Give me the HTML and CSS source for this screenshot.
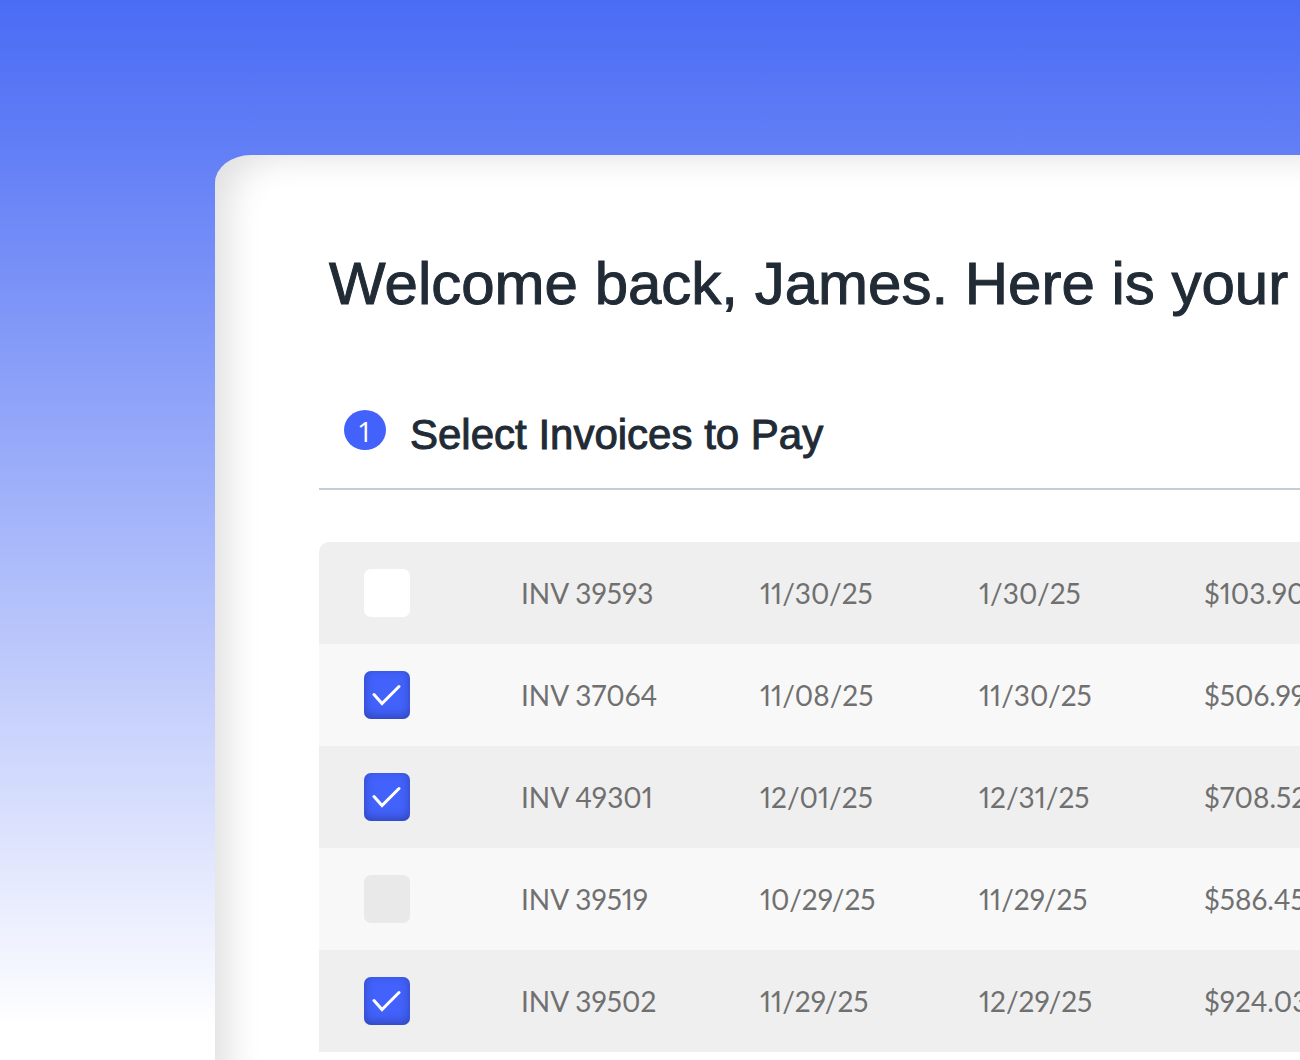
FILE: index.html
```html
<!DOCTYPE html>
<html lang="en">
<head>
    <meta charset="UTF-8">
    <meta name="viewport" content="width=device-width, initial-scale=1.0">
    <title>Select Invoices to Pay</title>
    <link rel="stylesheet" href="styles.css">
</head>
<body>
    <main class="panel">
        <h1>Welcome back, James. Here is your</h1>
        <div class="step">
            <span class="step-number">1</span>
            <h2>Select Invoices to Pay</h2>
        </div>
        <table class="invoices">
            <colgroup>
                <col class="col-check">
                <col class="col-invoice">
                <col class="col-date">
                <col class="col-due">
                <col>
            </colgroup>
            <tbody>
                <tr>
                    <td><input type="checkbox" class="check" aria-label="Select INV 39593"></td>
                    <td>INV 39593</td>
                    <td>11/30/25</td>
                    <td>1/30/25</td>
                    <td>$103.90</td>
                </tr>
                <tr>
                    <td><input type="checkbox" class="check" aria-label="Select INV 37064" checked></td>
                    <td>INV 37064</td>
                    <td>11/08/25</td>
                    <td>11/30/25</td>
                    <td>$506.99</td>
                </tr>
                <tr>
                    <td><input type="checkbox" class="check" aria-label="Select INV 49301" checked></td>
                    <td>INV 49301</td>
                    <td>12/01/25</td>
                    <td>12/31/25</td>
                    <td>$708.52</td>
                </tr>
                <tr>
                    <td><input type="checkbox" class="check" aria-label="Select INV 39519"></td>
                    <td>INV 39519</td>
                    <td>10/29/25</td>
                    <td>11/29/25</td>
                    <td>$586.45</td>
                </tr>
                <tr>
                    <td><input type="checkbox" class="check" aria-label="Select INV 39502" checked></td>
                    <td>INV 39502</td>
                    <td>11/29/25</td>
                    <td>12/29/25</td>
                    <td>$924.03</td>
                </tr>
            </tbody>
        </table>
    </main>
</body>
</html>
```
FILE: styles.css
```css
* {
    box-sizing: border-box;
}

body {
    min-height: 100vh;
    display: flex;
    margin: 0;
    padding: 155px 0 0 215px;
    overflow: hidden;
    background: linear-gradient(to bottom, #4a6cf5 0%, #6480f6 15%, #ffffff 97%);
    color: #212b36;
    font-family: "Liberation Sans", Arial, sans-serif;
}

.panel {
    flex: 1;
    min-width: 0;
    padding: 88px 0 0 104px;
    background: #fff;
    border-radius: 36px 0 0 0 / 28px 0 0 0;
    /* Shade only the left and top edges */
    box-shadow: inset 30px 18px 34px -16px rgba(0, 0, 0, 0.12);
}

h1, h2 {
    margin: 0;
    font-weight: 400;
    white-space: nowrap;
    -webkit-text-stroke: 1px #212b36;
}

h1 {
    padding-left: 10px;
    font-size: 60px;
    line-height: 82px;
}

.step {
    display: flex;
    align-items: flex-start;
    gap: 24px;
    margin-top: 85px;
    padding: 0 0 28px 25px;
    border-bottom: 2px solid #c4cdd8;
}

.step-number {
    width: 42px;
    height: 40px;
    border-radius: 50%;
    background: #4262fb;
    color: #fff;
    font-family: "Open Sans", sans-serif;
    font-size: 28px;
    line-height: 42px;
    text-align: center;
}

h2 {
    font-size: 42px;
    line-height: 50px;
}

.invoices {
    width: 100%;
    margin-top: 52px;
    border-collapse: collapse;
    table-layout: fixed;
    border-radius: 10px 0 0 0;
    overflow: hidden;
    color: #707070;
    font-family: Lato, sans-serif;
    font-size: 28px;
    font-variant-numeric: proportional-nums;
}

.col-check {
    width: 202px;
}

.col-invoice {
    width: 239px;
}

.col-date {
    width: 219px;
}

.col-due {
    width: 225px;
}

tr {
    height: 102px;
    background: #f8f8f8;
}

tr:nth-child(odd) {
    background: #efefef;
}

td {
    padding: 0;
    white-space: nowrap;
}

.check {
    appearance: none;
    display: grid;
    place-items: center;
    width: 46px;
    height: 48px;
    margin: 0 0 0 45px;
    border-radius: 7px;
    background: #e9e9e9;
}

tr:first-child .check {
    background: #fff;
}

.check:checked {
    background: #4262fb;
    box-shadow: inset 0 -3px 10px rgba(30, 40, 120, 0.5);
}

.check:checked::before {
    content: url('data:image/svg+xml,<svg xmlns="http://www.w3.org/2000/svg" width="30" height="22" viewBox="0 0 30 22"><path d="M2 10.5L10 19.5L27 2.5" fill="none" stroke="white" stroke-width="3" stroke-linecap="round"/></svg>');
    height: 22px;
    line-height: 0;
}
```
